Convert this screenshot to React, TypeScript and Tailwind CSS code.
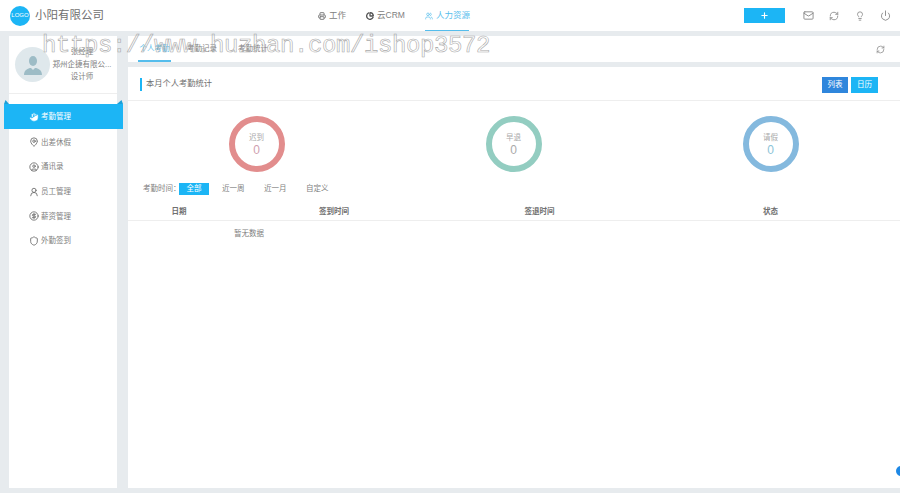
import React from "react";
import { Printer, PieChart, Users, Mail, RefreshCw, Lightbulb, Power, Plus, Hand, MapPin, UserRound, CircleDollarSign, Shield, CircleUser } from "lucide-react";

const font = { fontFamily: '"Liberation Sans","Noto Sans CJK SC",sans-serif' };

function Ring({ label, color, text }: { label: string; color: string; text: string }) {
  return (
    <div className="w-[56px] h-[56px] rounded-full border-[6px] flex flex-col items-center justify-center" style={{ borderColor: color }}>
      <span className="text-[7.5px] leading-[12px] text-[#aaa]">{label}</span>
      <span className="text-[12px] leading-[12px]" style={{ color: text }}>0</span>
    </div>
  );
}

const menu = [
  { t: "出差休假", I: MapPin },
  { t: "通讯录", I: CircleUser },
  { t: "员工管理", I: UserRound },
  { t: "薪资管理", I: CircleDollarSign },
  { t: "外勤签到", I: Shield },
];

export default function App() {
  return (
    <div style={font} className="relative w-[900px] h-[493px] overflow-hidden bg-[#e7ebee] flex flex-col text-[#666]">
      <header className="h-[31px] shrink-0 bg-white flex items-center relative">
        <div className="w-[20px] h-[20px] ml-[10px] rounded-full bg-[#1cb5f5] text-white text-[6px] flex items-center justify-center">LOGO</div>
        <span className="ml-[5px] w-[69px] whitespace-nowrap text-[11.5px] text-[#707070]">小阳有限公司</span>
        <nav className="ml-[214px] flex h-full text-[8.5px] text-[#808080]">
          <div className="flex items-center gap-[3px] w-[28px] whitespace-nowrap"><Printer size={8} strokeWidth={3} className="shrink-0" />工作</div>
          <div className="flex items-center gap-[3px] ml-[20px] w-[39px] whitespace-nowrap"><PieChart size={8} strokeWidth={4} className="shrink-0 text-[#555]" />云CRM</div>
          <div className="flex items-center gap-[3px] ml-[20px] w-[44px] whitespace-nowrap text-[#55bdec] border-b border-t border-t-transparent border-b-[#55bdec]"><Users size={8} className="shrink-0" />人力资源</div>
        </nav>
        <div className="ml-auto flex items-center text-[#888]">
          <div className="w-[41px] h-[15px] bg-[#1cb5f5] text-white flex items-center justify-center"><Plus size={9} strokeWidth={3} /></div>
          <Mail size={11} className="ml-[18px]" />
          <RefreshCw size={10} className="ml-[15px]" />
          <Lightbulb size={10} className="ml-[16px]" />
          <Power size={11} className="ml-[15px] mr-[9px]" />
        </div>
      </header>

      <div className="flex-1 flex pt-[5px] pb-[5px] min-h-0">
        <aside className="relative w-[108px] ml-[9px] shrink-0 bg-white flex flex-col">
          <div className="h-[58px] border-b border-[#eee] flex items-start pl-[6px] pt-[11px]">
            <div className="w-[35px] h-[35px] rounded-full bg-[#dfe8ec] flex items-center justify-center shrink-0">
              <svg width="24" height="24" viewBox="0 0 24 24" fill="#9dbcc6">
                <ellipse cx="12" cy="8" rx="4" ry="5" />
                <path d="M3 22c0-5 4-7 7-7l2 2 2-2c3 0 7 2 7 7z" />
              </svg>
            </div>
            <div className="w-[62px] -mt-[1px] ml-[1px] text-center text-[7.5px] leading-[12.5px] text-[#808080]">
              <div>张经理</div>
              <div className="whitespace-nowrap">郑州企捷有限公...</div>
              <div>设计师</div>
            </div>
          </div>
          <div className="relative -mx-[5px] mt-[10px] w-[119px] h-[25px] pt-[1px] bg-[#1cb5f5] text-white text-[7.5px] flex items-center pl-[25px] gap-[2px]">
            <Hand size={10} fill="white" stroke="#1cb5f5" strokeWidth={1.2} className="shrink-0" />考勤管理
            <svg className="absolute left-0 -top-[4px]" width="5" height="4" viewBox="0 0 5 4"><path d="M0 4L1.5 0L5 4z" fill="#1a9fd8" /></svg>
            <svg className="absolute right-0 -top-[4px]" width="6" height="4" viewBox="0 0 6 4"><path d="M6 4L4.5 0L0 4z" fill="#1a9fd8" /></svg>
          </div>
          <div className="pt-[1px] flex flex-col">
            {menu.map(({ t, I }) => (
              <div key={t} className="h-[24.7px] flex items-center pl-[20px] gap-[2px] text-[7.5px] text-[#808080]">
                <I size={10} className="shrink-0 text-[#666]" />{t}
              </div>
            ))}
          </div>
        </aside>

        <main className="ml-[11px] flex-1 flex flex-col gap-[5px] min-w-0">
          <div className="h-[26px] shrink-0 bg-white flex items-stretch pl-[10px] pr-[15px] text-[7.5px] text-[#808080]">
            <div className="w-[33px] flex items-center justify-center text-[#55bdec] border-b-2 border-t-2 border-t-transparent border-b-[#55bdec]">个人考勤</div>
            <div className="ml-[16px] flex items-center">考勤记录</div>
            <div className="ml-[21px] flex items-center">考勤统计</div>
            <div className="ml-auto flex items-center text-[#888]"><RefreshCw size={9} /></div>
          </div>

          <section className="flex-1 bg-white flex flex-col min-h-0">
            <div className="h-[34px] shrink-0 border-b border-[#eee] flex items-center pl-[12px] pr-[22px]">
              <div className="w-[2px] h-[13px] mt-[1px] bg-[#1cb5f5]" />
              <span className="ml-[4px] mt-[2px] text-[8.25px] text-[#707070]">本月个人考勤统计</span>
              <div className="ml-auto mt-[2px] flex gap-[3px] text-[7.5px] text-white">
                <div className="w-[26px] h-[16px] bg-[#2f86dc] flex items-center justify-center">列表</div>
                <div className="w-[27px] h-[16px] bg-[#1cb5f5] flex items-center justify-center">日历</div>
              </div>
            </div>

            <div className="grid grid-cols-3 pt-[15px] pr-[1px]">
              <div className="flex justify-center"><Ring label="迟到" color="#e28d8d" text="#cf9fb0" /></div>
              <div className="flex justify-center"><Ring label="早退" color="#93cdc1" text="#aaa" /></div>
              <div className="flex justify-center"><Ring label="请假" color="#84b9de" text="#8cc4d8" /></div>
            </div>

            <div className="flex items-center mt-[10px] pl-[15px] text-[7.5px] text-[#808080] h-[13px]">
              <span className="w-[36px] whitespace-nowrap">考勤时间：</span>
              <span className="w-[30px] h-[12px] bg-[#1cb5f5] text-white flex items-center justify-center">全部</span>
              <span className="ml-[13px]">近一周</span>
              <span className="ml-[19.5px]">近一月</span>
              <span className="ml-[19.5px]">自定义</span>
            </div>

            <div className="grid grid-cols-[102px_208px_203px_1fr] h-[22px] pt-[4px] mt-[4px] border-b border-[#eee] items-center text-[7.5px] font-bold text-[#707070] text-center">
              <div>日期</div>
              <div>签到时间</div>
              <div>签退时间</div>
              <div>状态</div>
            </div>
            <div className="pl-[106px] mt-[7px] text-[7.5px] text-[#808080]">暂无数据</div>
          </section>
        </main>
      </div>

      <div className="absolute left-[42px] top-[31px] text-[24px] leading-[30px] whitespace-nowrap text-transparent tracking-[-0.4px] [-webkit-text-stroke:0.6px_#aaa]" style={{ fontFamily: '"Liberation Mono",monospace' }}>
        https://www.huzhan.com/ishop3572
      </div>
      <div className="absolute left-[892px] top-[459px] w-[24px] h-[24px] rounded-full bg-white flex items-center justify-center">
        <div className="w-[10px] h-[10px] rounded-full bg-[#1e88e5] -ml-[6px]" />
      </div>
    </div>
  );
}
